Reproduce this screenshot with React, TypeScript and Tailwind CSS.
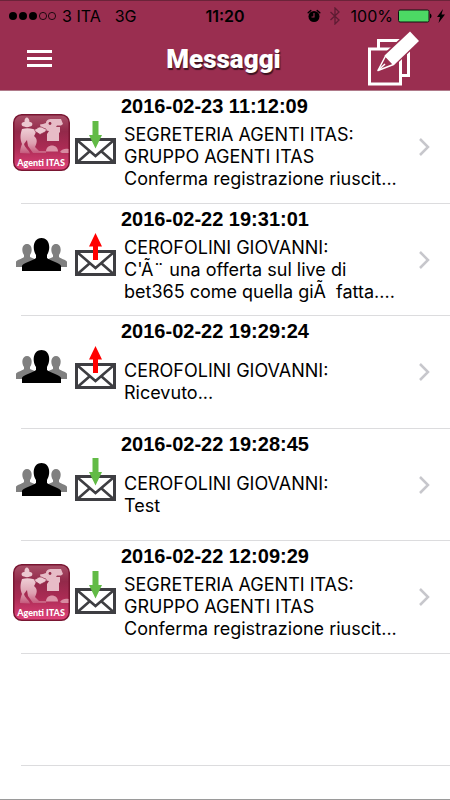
import { Fragment } from "react";

type Direction = "in" | "out";

interface Message {
  id: number;
  date: string;
  lines: string[];
  direction: Direction;
  sender: "agency" | "person";
}

const messages: Message[] = [
  {
    id: 1,
    date: "2016-02-23 11:12:09",
    lines: ["SEGRETERIA AGENTI ITAS:", "GRUPPO AGENTI ITAS", "Conferma registrazione riuscit..."],
    direction: "in",
    sender: "agency",
  },
  {
    id: 2,
    date: "2016-02-22 19:31:01",
    lines: ["CEROFOLINI GIOVANNI:", "C'Ã¨ una offerta sul live di", "bet365 come quella giÃ\u00a0 fatta...."],
    direction: "out",
    sender: "person",
  },
  {
    id: 3,
    date: "2016-02-22 19:29:24",
    lines: ["CEROFOLINI GIOVANNI:", "Ricevuto..."],
    direction: "out",
    sender: "person",
  },
  {
    id: 4,
    date: "2016-02-22 19:28:45",
    lines: ["CEROFOLINI GIOVANNI:", "Test"],
    direction: "in",
    sender: "person",
  },
  {
    id: 5,
    date: "2016-02-22 12:09:29",
    lines: ["SEGRETERIA AGENTI ITAS:", "GRUPPO AGENTI ITAS", "Conferma registrazione riuscit..."],
    direction: "in",
    sender: "agency",
  },
];

function StatusBar() {
  return (
    <div className="grid grid-cols-[1fr_auto_1fr] items-center h-[30px] px-1 text-base text-black">
      <div className="flex items-center pl-1">
        <svg className="w-12 h-3" viewBox="0 0 48 12" aria-label="Signal strength">
          <circle cx="5" cy="6" r="4" />
          <circle cx="15" cy="6" r="4" />
          <circle cx="25" cy="6" r="4" />
          <circle cx="35" cy="6" r="3.6" fill="none" stroke="currentColor" strokeWidth="0.8" />
          <circle cx="44" cy="6" r="3.6" fill="none" stroke="currentColor" strokeWidth="0.8" />
        </svg>
        <span className="ml-1.5">3 ITA</span>
        <span className="ml-3.5">3G</span>
      </div>
      <span className="font-semibold">11:20</span>
      <div className="flex items-center justify-end">
        <svg className="w-[14px] h-[14px]" viewBox="0 0 14 14" aria-label="Alarm">
          <circle cx="7" cy="7.5" r="5.5" />
          <path d="M1.200 3.800 3.800 1.500M12.800 3.800 10.200 1.500" stroke="currentColor" strokeWidth="1.5" strokeLinecap="round" />
          <path d="M7 4v4H4.500" fill="none" stroke="#9a2e50" strokeWidth="1.1" />
        </svg>
        <svg className="w-3 h-[18px] ml-2" viewBox="0 0 12 18" aria-label="Bluetooth">
          <path d="M1.500 5 10 13 6 17V1l4 4-8.500 8" fill="none" stroke="#5e1c33" strokeWidth="1.3" />
        </svg>
        <span className="ml-2.5">100%</span>
        <svg className="w-[35px] h-[14px] ml-1" viewBox="0 0 35 14" aria-label="Battery">
          <rect x="1.500" y="1" width="30.500" height="12" rx="1.500" fill="#4cd964" stroke="#111" strokeWidth="1" />
          <path d="M33 4.500c2 .8 2 4.200 0 5z" />
        </svg>
        <svg className="w-2.5 h-[14px] ml-1" viewBox="0 0 10 14" aria-label="Charging">
          <path d="M7 0 1 8h3L2.500 14 9 5.500H5.500z" />
        </svg>
      </div>
    </div>
  );
}

function ComposeIcon() {
  return (
    <svg className="w-[52px] h-[55px]" viewBox="0 0 52 55" fill="none" stroke="#fff">
      <rect x="10.500" y="9.500" width="30" height="35" strokeWidth="3" />
      <rect x="1.500" y="18" width="31" height="35" fill="#9a2e50" strokeWidth="3" />
      <path d="M16 24.500 42 0.500 51 10 25 34.500z" fill="#9a2e50" stroke="#9a2e50" strokeWidth="3" />
      <path d="M17.500 25 10 39.500 25.500 33.500z" fill="#9a2e50" strokeWidth="1.500" strokeLinejoin="round" />
      <path d="M10 39.500 17 33" strokeWidth="1.500" />
      <path d="M16.500 24.500 42 0.500 51 10 26 34z" fill="#fff" stroke="none" />
    </svg>
  );
}

function AgencyLogo() {
  return (
    <svg className="w-[57px] h-[57px]" viewBox="0 0 57 57" role="img" aria-label="Agenti ITAS">
      <defs>
        <linearGradient id="logo-bg" x1="0" y1="0" x2="0" y2="1">
          <stop offset="0" stopColor="#a85068" />
          <stop offset="0.3" stopColor="#93294a" />
          <stop offset="0.6" stopColor="#ab2b54" />
          <stop offset="1" stopColor="#e0427a" />
        </linearGradient>
        <linearGradient id="logo-fade" x1="0" y1="0" x2="0" y2="1">
          <stop offset="0" stopColor="#efcfd6" />
          <stop offset="0.6" stopColor="#dda0b0" />
          <stop offset="1" stopColor="#c4577a" />
        </linearGradient>
      </defs>
      <rect x="0.750" y="0.750" width="55.500" height="55.500" rx="8" fill="url(#logo-bg)" stroke="#791632" strokeWidth="1.500" />
      {/* Lady: hair, shoulders and resting arm */}
      <path d="M11 12.500c-3.500-.5-3-5 .5-4.500-.5-6 5-6 5 0 3.500-.5 4 4 .5 4.500-2 1-4 1-6 0z" fill="#ecc9d1" />
      <path
        d="M9 15c4-1 7-1 11 0 4 1 3 4 1 7 4 3 3 7 1 11l4 4h7v2H20l-5-7-1-6-3 4c1 4 5 6 6 9.500l-10-.5c0-4 1-6 2-9-2-5-2-9 0-15z"
        fill="url(#logo-fade)"
      />
      {/* Beast: head, neck and body */}
      <path d="M27 10.500c2-.5 4-.5 6-1.500 0-3 3-4.500 7-4h8l2 5-2 1.500h-4l-1 1.500h4v5l-1 1v8H34v-7l2-3-8-1.500z" fill="#e7bcc7" />
      <circle cx="37" cy="9.500" r="1.400" fill="#912746" />
      <path d="M24 14.500c1-2 5-2 7 0 3-.5 3 3 0 4l-4 2-3-2c-3-1-3-4 0-4z" fill="#eccad2" stroke="#93294a" strokeWidth="0.700" />
      <path d="M33 37.500c0-8 12-8 12 0z" fill="#dc94a8" />
      <path d="M47 38c2-3.500 6-3.500 8.500-3v4H49z" fill="#d78ba1" />
      <text x="28" y="52" fill="#fff" textAnchor="middle" className="font-['Lato',sans-serif] text-[9px] font-black">
        Agenti ITAS
      </text>
    </svg>
  );
}

function PeopleIcon() {
  return (
    <svg className="w-[57px] h-9" viewBox="0 0 57 36" role="img" aria-label="Contact">
      <g fill="#808080">
        <path d="M3 30v-5c0-2 6-3 8-5v-2c-3-4-2-11 3-11s6 7 3 11v2l7 3v7z" />
        <path d="M54 30v-5c0-2-6-3-8-5v-2c3-4 2-11-3-11s-6 7-3 11v2l-7 3v7z" />
      </g>
      <path d="M9 34v-5c0-3 11-5 14-8v-3c-4-6-3-17 5.500-17S38 12 34 18v3c3 3 14 5 14 8v5z" />
    </svg>
  );
}

function EnvelopeIcon({ direction }: { direction: Direction }) {
  return (
    <svg className="w-[41px] h-[43px]" viewBox="0 0 41 43" role="img" aria-label={direction === "in" ? "Received" : "Sent"}>
      <g fill="none" stroke="#3e3e42">
        <rect x="1.500" y="18.500" width="38" height="23" fill="#fff" strokeWidth="3" />
        <path d="M2.500 19.500 20.500 35 38.500 19.500M2.500 41 15 30M38.500 41 26 30" strokeWidth="2.600" />
      </g>
      {direction === "in" ? (
        <path d="M17.500 0h6v14H27l-6.500 13.500L14 14h3.500z" fill="#62bb46" />
      ) : (
        <path d="M20.500 0 27 13.500h-4V27h-5V13.500h-4z" fill="#ff0000" />
      )}
    </svg>
  );
}

function MessageRow({ message }: { message: Message }) {
  return (
    <li className="flex flex-col min-h-28 odd:min-h-[113px]">
      <a href="#" className="flex flex-1 items-stretch pl-[13px] pr-5">
        <div className="flex items-center gap-[5px] pb-2.5 shrink-0">
          {message.sender === "agency" ? <AgencyLogo /> : <PeopleIcon />}
          <EnvelopeIcon direction={message.direction} />
        </div>
        <div className="flex flex-col flex-1 min-w-0 pl-[5px] pb-2.5">
          <time className="font-['Liberation_Sans',sans-serif] text-xl leading-[30px] font-bold whitespace-nowrap">
            {message.date}
          </time>
          <p className="flex-1 flex flex-col justify-center pl-[3px] text-lg leading-[22px] whitespace-nowrap">
            <span>
              {message.lines.map((line, index) => (
                <Fragment key={line}>
                  {index > 0 && <br />}
                  {line}
                </Fragment>
              ))}
            </span>
          </p>
        </div>
        <svg className="w-3 h-5 self-center shrink-0" viewBox="0 0 12 20" fill="none" stroke="#c7c7cc" strokeWidth="2.500">
          <path d="M2 2 10 10 2 18" />
        </svg>
      </a>
      <div className="ml-[21px] h-px bg-[#dcdcde]" />
    </li>
  );
}

export default function App() {
  return (
    <div className="min-h-screen flex flex-col bg-white text-black border-b border-[#9a9a9a] font-['Inter','Liberation_Sans',sans-serif]">
      <header className="bg-[#9a2e50] border-t border-t-[#6b2339] border-b border-b-[#b07a8a]">
        <StatusBar />
        <div className="grid grid-cols-[1fr_auto_1fr] items-center h-[59px] pb-1 pl-[27px] pr-[30px]">
          <button type="button" aria-label="Menu" className="justify-self-start cursor-pointer">
            <svg className="w-[25px] h-[18px]" viewBox="0 0 25 18" fill="#fff">
              <path d="M0 0h25v3H0zM0 7h25v3H0zM0 14h25v3H0z" />
            </svg>
          </button>
          <h1 className="font-['Roboto',sans-serif] text-[26px] leading-8 font-black text-white [text-shadow:1px_2px_1px_#00000099]">
            Messaggi
          </h1>
          <button type="button" aria-label="New message" className="justify-self-end cursor-pointer">
            <ComposeIcon />
          </button>
        </div>
      </header>

      <main className="flex-1">
        <ul>
          {messages.map((message) => (
            <MessageRow key={message.id} message={message} />
          ))}
          {/* Empty table row below the last message */}
          <li aria-hidden="true" className="flex flex-col justify-end h-28">
            <div className="ml-[21px] h-px bg-[#dcdcde]" />
          </li>
        </ul>
      </main>
    </div>
  );
}
